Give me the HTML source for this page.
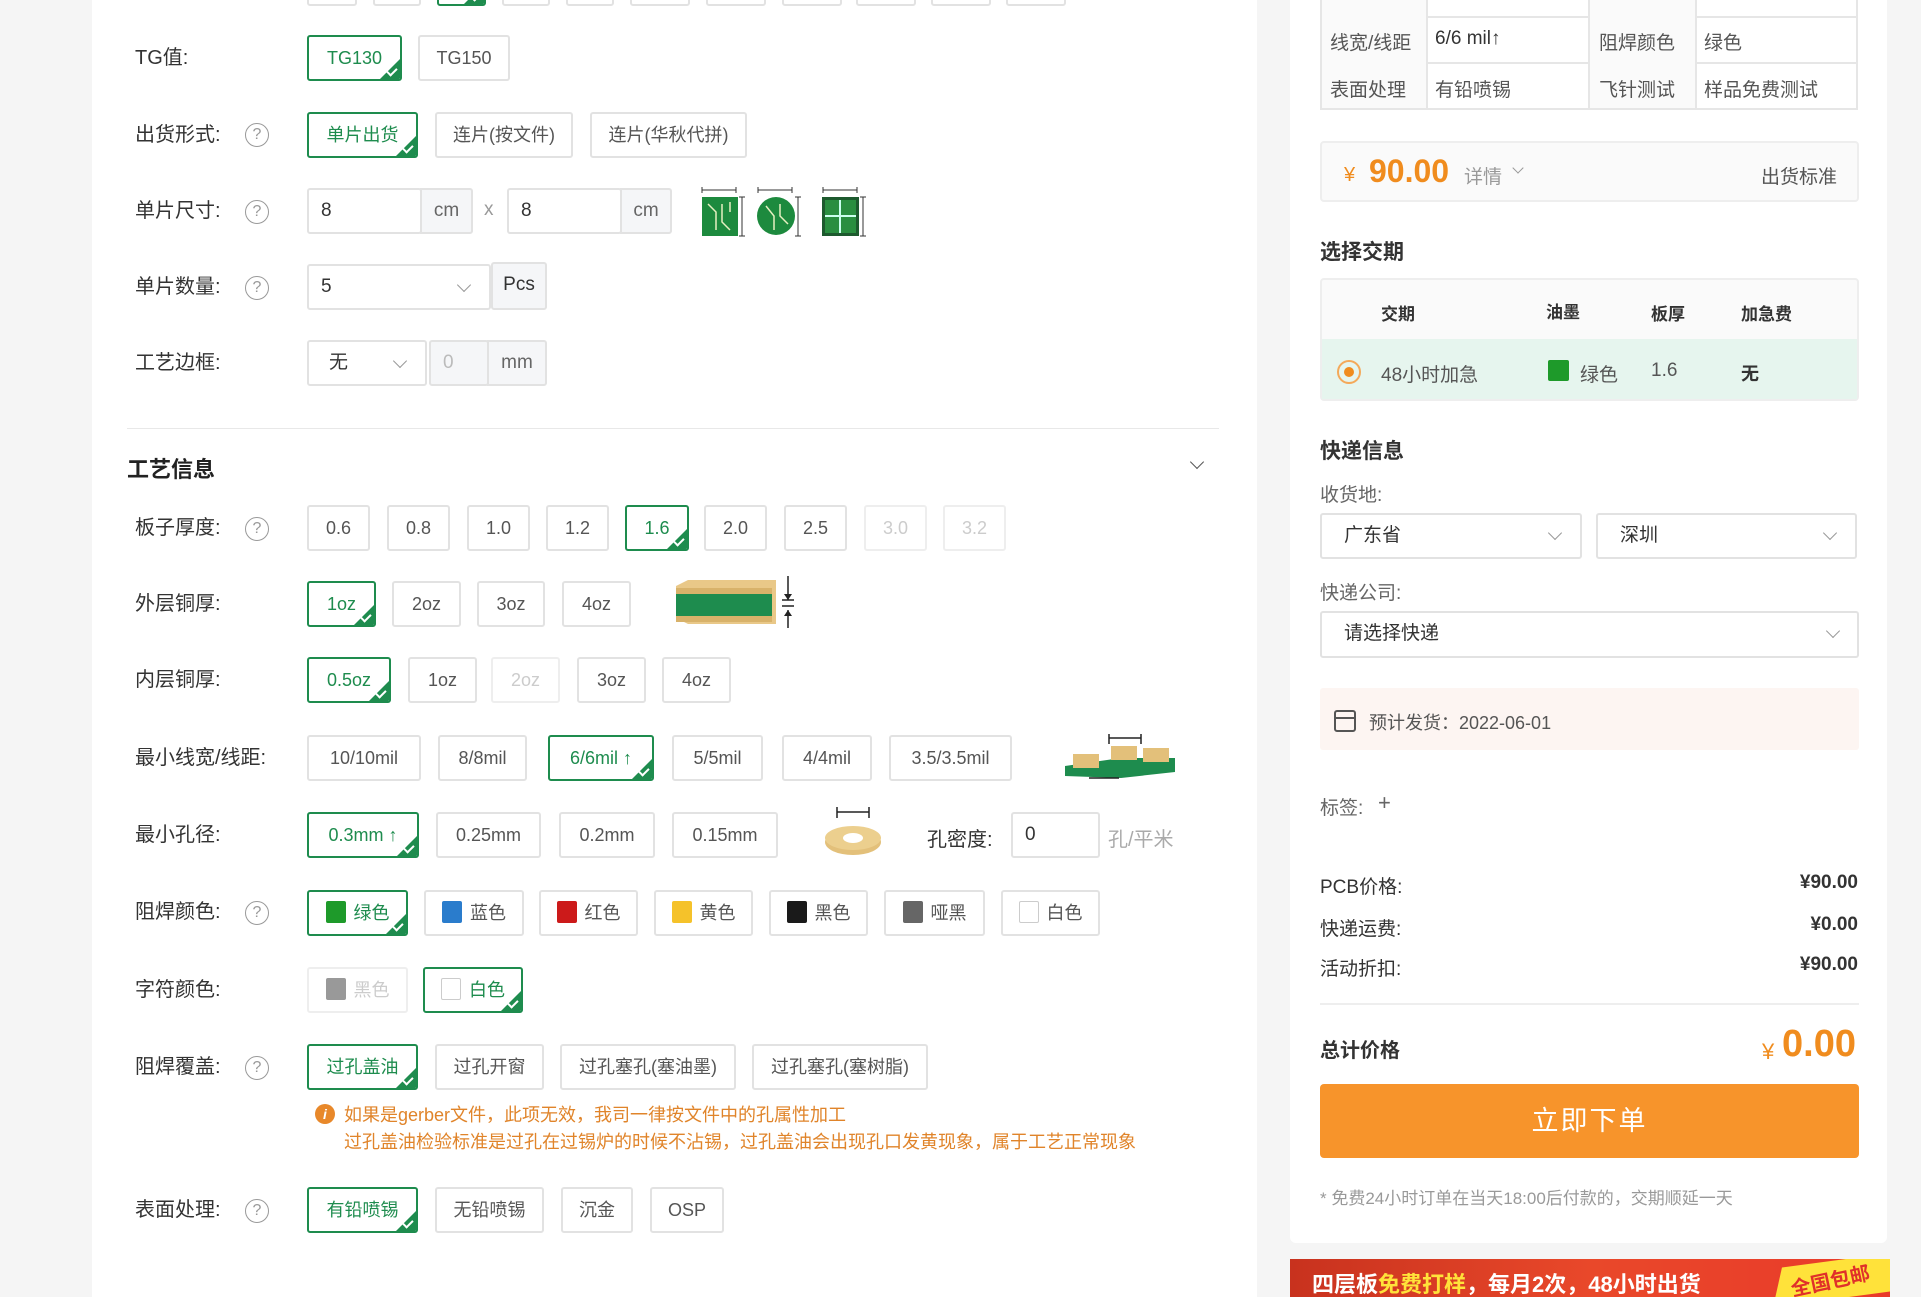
<!DOCTYPE html>
<html><head><meta charset="utf-8">
<style>
*{margin:0;padding:0;box-sizing:border-box}
body{width:1921px;height:1297px;background:#f5f5f5;font-family:"Liberation Sans","Noto Sans CJK SC",sans-serif;color:#333;position:relative;overflow:hidden}
.card{position:absolute;background:#fff}
.a{position:absolute}
.lb{position:absolute;left:135px;font-size:20px;color:#333;line-height:24px}
.q{position:absolute;left:245px;width:24px;height:24px;border:1.5px solid #999;border-radius:50%;color:#999;font-size:16px;text-align:center;line-height:21px}
.b{position:absolute;height:46px;border:2px solid #e2e2e2;border-radius:3px;font-size:18px;color:#555;text-align:center;line-height:42px;background:#fff;white-space:nowrap;overflow:hidden}
.s{border-color:#1e8c4e;color:#1e8c4e}
.s::after{content:"";position:absolute;right:0;bottom:0;border-style:solid;border-width:0 0 20px 20px;border-color:transparent transparent #1e8c4e transparent}
.s::before{content:"";position:absolute;right:3px;bottom:5px;width:8px;height:4px;border-left:2px solid #fff;border-bottom:2px solid #fff;transform:rotate(-45deg);z-index:2}
.d{color:#ccc;border-color:#eee}
.sw{display:inline-block;width:20px;height:22px;vertical-align:-4px;margin-right:8px;border-radius:2px}
.inp{position:absolute;height:46px;border:2px solid #e2e2e2;border-radius:3px;font-size:19px;line-height:42px;padding-left:12px;color:#333;background:#fff}
.add{position:absolute;height:46px;border:2px solid #e2e2e2;background:#f5f6f8;font-size:19px;line-height:42px;text-align:center;color:#666}
.chev{position:absolute;width:10px;height:10px;border-right:1.5px solid #999;border-bottom:1.5px solid #999;transform:rotate(45deg)}
.t{position:absolute;font-size:19px;color:#555}
</style></head><body>

<div class="card" style="left:92px;top:0;width:1165px;height:1297px"></div>
<div class="card" style="left:1290px;top:0;width:597px;height:1243px;border-radius:0 0 6px 6px"></div>

<!-- top partial row -->
<div class="b" style="left:307px;top:-40px;width:50px"></div>
<div class="b" style="left:373px;top:-40px;width:48px"></div>
<div class="b s" style="left:437px;top:-40px;width:49px"></div>
<div class="b" style="left:502px;top:-40px;width:48px"></div>
<div class="b" style="left:566px;top:-40px;width:48px"></div>
<div class="b" style="left:630px;top:-40px;width:60px"></div>
<div class="b" style="left:706px;top:-40px;width:60px"></div>
<div class="b" style="left:782px;top:-40px;width:60px"></div>
<div class="b" style="left:856px;top:-40px;width:60px"></div>
<div class="b" style="left:931px;top:-40px;width:60px"></div>
<div class="b" style="left:1006px;top:-40px;width:60px"></div>

<!-- TG -->
<div class="lb" style="top:46px">TG值:</div>
<div class="b s" style="left:307px;top:35px;width:95px">TG130</div>
<div class="b" style="left:418px;top:35px;width:92px">TG150</div>

<div class="lb" style="top:123px">出货形式:</div><div class="q" style="top:123px">?</div>
<div class="b s" style="left:307px;top:112px;width:111px">单片出货</div>
<div class="b" style="left:435px;top:112px;width:138px">连片(按文件)</div>
<div class="b" style="left:590px;top:112px;width:157px">连片(华秋代拼)</div>

<div class="lb" style="top:199px">单片尺寸:</div><div class="q" style="top:200px">?</div>
<div class="inp" style="left:307px;top:188px;width:115px">8</div>
<div class="add" style="left:420px;top:188px;width:53px;border-radius:0 3px 3px 0">cm</div>
<div class="t" style="left:484px;top:199px;color:#999">x</div>
<div class="inp" style="left:507px;top:188px;width:115px">8</div>
<div class="add" style="left:620px;top:188px;width:52px;border-radius:0 3px 3px 0">cm</div>
<svg class="a" style="left:700px;top:182px" width="180" height="56">
<g stroke="#333" stroke-width="1" fill="none"><path d="M2 8H36M2 5V11M36 5V11M42 15V54M39 15H45M39 54H45"/><path d="M58 8H92M58 5V11M92 5V11M98 15V54M95 15H101M95 54H101"/><path d="M123 8H157M123 5V11M157 5V11M163 15V54M160 15H166M160 54H166"/></g>
<rect x="2" y="15" width="36" height="39" fill="#1d8a3e"/>
<circle cx="76" cy="34" r="19" fill="#1d8a3e"/>
<rect x="122" y="15" width="37" height="39" fill="#1d5a2e"/><rect x="125" y="18" width="31" height="33" fill="#2a8e40"/>
<path d="M125 34H156M140 18V51" stroke="#cfe" stroke-width="2"/>
<g stroke="#e6f0c0" stroke-width="1.5" fill="none"><path d="M8 22L16 30V48M22 22V40L30 48M30 20V30"/><path d="M66 24L74 34V48M80 22V34L88 42"/></g>
</svg>

<div class="lb" style="top:275px">单片数量:</div><div class="q" style="top:276px">?</div>
<div class="inp" style="left:307px;top:264px;width:184px">5</div><div class="chev" style="left:459px;top:280px"></div>
<div class="add" style="left:491px;top:262px;width:56px;height:48px;border-radius:3px;background:#f5f6f8;color:#333">Pcs</div>

<div class="lb" style="top:351px">工艺边框:</div>
<div class="inp" style="left:307px;top:340px;width:120px;padding-left:20px">无</div><div class="chev" style="left:395px;top:356px"></div>
<div class="inp" style="left:429px;top:340px;width:60px;background:#f5f6f8;color:#bbb">0</div>
<div class="add" style="left:487px;top:340px;width:60px;border-radius:0 3px 3px 0">mm</div>

<div class="a" style="left:127px;top:428px;width:1092px;height:1px;background:#e8e8e8"></div>
<div class="a" style="left:127px;top:452px;font-size:22px;font-weight:bold;color:#222">工艺信息</div>
<div class="chev" style="left:1192px;top:457px;border-color:#555"></div>

<div class="lb" style="top:516px">板子厚度:</div><div class="q" style="top:517px">?</div>
<div class="b" style="left:307px;top:505px;width:63px">0.6</div>
<div class="b" style="left:387px;top:505px;width:63px">0.8</div>
<div class="b" style="left:467px;top:505px;width:63px">1.0</div>
<div class="b" style="left:546px;top:505px;width:63px">1.2</div>
<div class="b s" style="left:625px;top:505px;width:64px">1.6</div>
<div class="b" style="left:704px;top:505px;width:63px">2.0</div>
<div class="b" style="left:784px;top:505px;width:63px">2.5</div>
<div class="b d" style="left:864px;top:505px;width:63px">3.0</div>
<div class="b d" style="left:943px;top:505px;width:63px">3.2</div>

<div class="lb" style="top:592px">外层铜厚:</div>
<div class="b s" style="left:307px;top:581px;width:69px">1oz</div>
<div class="b" style="left:392px;top:581px;width:69px">2oz</div>
<div class="b" style="left:477px;top:581px;width:68px">3oz</div>
<div class="b" style="left:562px;top:581px;width:69px">4oz</div>
<svg class="a" style="left:676px;top:576px" width="124" height="52">
<polygon points="0,10 12,4 100,4 100,48 12,48 0,42" fill="#e9c888"/>
<rect x="0" y="18" width="96" height="22" fill="#1e8c4e"/><rect x="0" y="12" width="96" height="6" fill="#d8b26a"/><rect x="0" y="40" width="96" height="6" fill="#d8b26a"/>
<path d="M112 0V24M112 34V52M106 24H118M106 30H118" stroke="#222" stroke-width="1.5"/>
<path d="M108 18L112 24L116 18M108 40L112 34L116 40" fill="#222"/>
</svg>

<div class="lb" style="top:668px">内层铜厚:</div>
<div class="b s" style="left:307px;top:657px;width:84px">0.5oz</div>
<div class="b" style="left:408px;top:657px;width:69px">1oz</div>
<div class="b d" style="left:491px;top:657px;width:69px">2oz</div>
<div class="b" style="left:577px;top:657px;width:69px">3oz</div>
<div class="b" style="left:662px;top:657px;width:69px">4oz</div>

<div class="lb" style="top:746px">最小线宽/线距:</div>
<div class="b" style="left:307px;top:735px;width:114px">10/10mil</div>
<div class="b" style="left:438px;top:735px;width:89px">8/8mil</div>
<div class="b s" style="left:548px;top:735px;width:106px">6/6mil ↑</div>
<div class="b" style="left:672px;top:735px;width:91px">5/5mil</div>
<div class="b" style="left:782px;top:735px;width:90px">4/4mil</div>
<div class="b" style="left:889px;top:735px;width:123px">3.5/3.5mil</div>
<svg class="a" style="left:1061px;top:728px" width="118" height="56">
<polygon points="4,38 60,30 114,30 114,44 60,50 4,48" fill="#1e8c4e"/>
<rect x="12" y="26" width="26" height="14" fill="#e3c07a"/><rect x="82" y="20" width="26" height="14" fill="#e3c07a"/><rect x="50" y="18" width="26" height="14" fill="#e3c07a"/>
<path d="M48 10H80M48 6V16M80 6V16M28 50H58" stroke="#222" stroke-width="1.5"/>
</svg>

<div class="lb" style="top:823px">最小孔径:</div>
<div class="b s" style="left:307px;top:812px;width:112px">0.3mm ↑</div>
<div class="b" style="left:436px;top:812px;width:105px">0.25mm</div>
<div class="b" style="left:559px;top:812px;width:96px">0.2mm</div>
<div class="b" style="left:672px;top:812px;width:106px">0.15mm</div>
<svg class="a" style="left:823px;top:804px" width="60" height="52">
<path d="M14 8H46M14 3V14M46 3V14" stroke="#222" stroke-width="1.5"/>
<ellipse cx="30" cy="38" rx="28" ry="13" fill="#e3c07a"/><ellipse cx="30" cy="34" rx="28" ry="12" fill="#eccf8e"/><ellipse cx="30" cy="34" rx="10" ry="5" fill="#fff"/>
</svg>
<div class="t" style="left:927px;top:823px;font-size:20px;color:#333">孔密度:</div>
<div class="inp" style="left:1011px;top:812px;width:89px">0</div>
<div class="t" style="left:1108px;top:823px;color:#aaa;font-size:20px">孔/平米</div>

<div class="lb" style="top:900px">阻焊颜色:</div><div class="q" style="top:901px">?</div>
<div class="b s" style="left:307px;top:890px;width:101px"><span class="sw" style="background:#1e9a2a"></span>绿色</div>
<div class="b" style="left:424px;top:890px;width:100px"><span class="sw" style="background:#2a7ccc"></span>蓝色</div>
<div class="b" style="left:539px;top:890px;width:99px"><span class="sw" style="background:#cc1a1a"></span>红色</div>
<div class="b" style="left:654px;top:890px;width:99px"><span class="sw" style="background:#f5c22a"></span>黄色</div>
<div class="b" style="left:769px;top:890px;width:99px"><span class="sw" style="background:#1a1a1a"></span>黑色</div>
<div class="b" style="left:884px;top:890px;width:101px"><span class="sw" style="background:#666"></span>哑黑</div>
<div class="b" style="left:1001px;top:890px;width:99px"><span class="sw" style="background:#fff;border:1.5px solid #ccc"></span>白色</div>

<div class="lb" style="top:978px">字符颜色:</div>
<div class="b d" style="left:307px;top:967px;width:101px;color:#ccc"><span class="sw" style="background:#999"></span>黑色</div>
<div class="b s" style="left:423px;top:967px;width:100px"><span class="sw" style="background:#fff;border:1.5px solid #ccc"></span>白色</div>

<div class="lb" style="top:1055px">阻焊覆盖:</div><div class="q" style="top:1056px">?</div>
<div class="b s" style="left:307px;top:1044px;width:111px">过孔盖油</div>
<div class="b" style="left:435px;top:1044px;width:109px">过孔开窗</div>
<div class="b" style="left:560px;top:1044px;width:176px">过孔塞孔(塞油墨)</div>
<div class="b" style="left:752px;top:1044px;width:176px">过孔塞孔(塞树脂)</div>
<div class="a" style="left:315px;top:1104px;width:20px;height:20px;border-radius:50%;background:#e8882a;color:#fff;font-size:14px;font-weight:bold;text-align:center;line-height:20px;font-style:italic">i</div>
<div class="t" style="left:344px;top:1101px;color:#e0842a;font-size:18px">如果是gerber文件，此项无效，我司一律按文件中的孔属性加工</div>
<div class="t" style="left:344px;top:1128px;color:#e0842a;font-size:18px">过孔盖油检验标准是过孔在过锡炉的时候不沾锡，过孔盖油会出现孔口发黄现象，属于工艺正常现象</div>

<div class="lb" style="top:1198px">表面处理:</div><div class="q" style="top:1199px">?</div>
<div class="b s" style="left:307px;top:1187px;width:111px">有铅喷锡</div>
<div class="b" style="left:435px;top:1187px;width:109px">无铅喷锡</div>
<div class="b" style="left:561px;top:1187px;width:72px">沉金</div>
<div class="b" style="left:650px;top:1187px;width:74px">OSP</div>

<!-- right panel -->
<div class="a" style="left:1320px;top:-30px;width:538px;height:140px;border:2px solid #e6e6e6;border-top:none"></div>
<div class="a" style="left:1320px;top:16px;width:538px;height:2px;background:#e6e6e6"></div>
<div class="a" style="left:1320px;top:62px;width:538px;height:2px;background:#e6e6e6"></div>
<div class="a" style="left:1322px;top:0;width:104px;height:108px;background:#fafafa"></div>
<div class="a" style="left:1590px;top:0;width:105px;height:108px;background:#fafafa"></div>
<div class="a" style="left:1426px;top:0;width:2px;height:110px;background:#e6e6e6"></div>
<div class="a" style="left:1588px;top:0;width:2px;height:110px;background:#e6e6e6"></div>
<div class="a" style="left:1695px;top:0;width:2px;height:110px;background:#e6e6e6"></div>
<div class="t" style="left:1330px;top:28px;color:#555">线宽/线距</div><div class="t" style="left:1435px;top:28px;color:#333">6/6 mil↑</div>
<div class="t" style="left:1599px;top:28px">阻焊颜色</div><div class="t" style="left:1704px;top:28px">绿色</div>
<div class="t" style="left:1330px;top:75px">表面处理</div><div class="t" style="left:1435px;top:75px">有铅喷锡</div>
<div class="t" style="left:1599px;top:75px">飞针测试</div><div class="t" style="left:1704px;top:75px">样品免费测试</div>

<div class="a" style="left:1320px;top:141px;width:539px;height:61px;border:2px solid #eee;background:#fafafa;border-radius:4px"></div>
<div class="a" style="left:1344px;top:164px;color:#f08c1e;font-size:20px">¥</div>
<div class="a" style="left:1369px;top:153px;color:#f08c1e;font-size:32px;font-weight:bold">90.00</div>
<div class="t" style="left:1464px;top:162px;color:#999">详情</div><div class="chev" style="left:1514px;top:164px;width:8px;height:8px"></div>
<div class="t" style="left:1761px;top:162px;color:#555">出货标准</div>

<div class="a" style="left:1320px;top:236px;font-size:21px;font-weight:bold;color:#333">选择交期</div>
<div class="a" style="left:1320px;top:278px;width:539px;height:123px;border:2px solid #eee;border-radius:4px;background:#fafafa"></div>
<div class="a" style="left:1322px;top:339px;width:535px;height:60px;background:#e6f5ee"></div>
<div class="a" style="left:1381px;top:300px;font-size:17px;font-weight:bold">交期</div>
<div class="a" style="left:1546px;top:298px;font-size:17px;font-weight:bold">油墨</div>
<div class="a" style="left:1651px;top:300px;font-size:17px;font-weight:bold">板厚</div>
<div class="a" style="left:1741px;top:300px;font-size:17px;font-weight:bold">加急费</div>
<div class="a" style="left:1337px;top:360px;width:24px;height:24px;border-radius:50%;border:2px solid #f4a95a"></div>
<div class="a" style="left:1344px;top:367px;width:10px;height:10px;border-radius:50%;background:#f08c1e"></div>
<div class="t" style="left:1381px;top:360px">48小时加急</div>
<div class="a" style="left:1548px;top:360px;width:21px;height:21px;background:#1e9a2a;border-radius:2px"></div>
<div class="t" style="left:1580px;top:360px">绿色</div>
<div class="t" style="left:1651px;top:360px">1.6</div>
<div class="a" style="left:1741px;top:360px;font-size:18px;font-weight:bold">无</div>

<div class="a" style="left:1320px;top:435px;font-size:21px;font-weight:bold;color:#333">快递信息</div>
<div class="t" style="left:1320px;top:480px;color:#666">收货地:</div>
<div class="inp" style="left:1320px;top:513px;width:262px;height:46px;padding-left:22px;line-height:42px">广东省</div><div class="chev" style="left:1550px;top:528px"></div>
<div class="inp" style="left:1596px;top:513px;width:261px;height:46px;padding-left:22px">深圳</div><div class="chev" style="left:1825px;top:528px"></div>
<div class="t" style="left:1320px;top:578px;color:#666">快递公司:</div>
<div class="inp" style="left:1320px;top:611px;width:539px;height:47px;padding-left:22px">请选择快递</div><div class="chev" style="left:1828px;top:626px"></div>

<div class="a" style="left:1320px;top:688px;width:539px;height:62px;background:#fdf5f2;border-radius:3px"></div>
<div class="a" style="left:1334px;top:710px;width:22px;height:22px;border:2px solid #555;border-radius:3px"></div>
<div class="a" style="left:1334px;top:717px;width:22px;height:2px;background:#555"></div>
<div class="t" style="left:1369px;top:709px;font-size:18px">预计发货：2022-06-01</div>

<div class="t" style="left:1320px;top:793px;color:#666">标签:</div>
<div class="a" style="left:1378px;top:790px;font-size:22px;color:#666">+</div>

<div class="t" style="left:1320px;top:872px;color:#333">PCB价格:</div>
<div class="a" style="left:1750px;top:872px;width:108px;text-align:right;font-size:19px;font-weight:bold">¥90.00</div>
<div class="t" style="left:1320px;top:914px;color:#333">快递运费:</div>
<div class="a" style="left:1750px;top:914px;width:108px;text-align:right;font-size:19px;font-weight:bold">¥0.00</div>
<div class="t" style="left:1320px;top:954px;color:#333">活动折扣:</div>
<div class="a" style="left:1750px;top:954px;width:108px;text-align:right;font-size:19px;font-weight:bold">¥90.00</div>
<div class="a" style="left:1320px;top:1003px;width:539px;height:2px;background:#eee"></div>
<div class="a" style="left:1320px;top:1034px;font-size:20px;font-weight:bold">总计价格</div>
<div class="a" style="left:1762px;top:1039px;color:#f08c1e;font-size:22px">¥</div>
<div class="a" style="left:1782px;top:1023px;color:#f08c1e;font-size:38px;font-weight:bold">0.00</div>
<div class="a" style="left:1320px;top:1084px;width:539px;height:74px;background:#f7942b;border-radius:4px;color:#fff;font-size:27px;text-align:center;line-height:74px;letter-spacing:2px">立即下单</div>
<div class="t" style="left:1320px;top:1184px;color:#999;font-size:17px">* 免费24小时订单在当天18:00后付款的，交期顺延一天</div>

<div class="a" style="left:1290px;top:1259px;width:600px;height:38px;background:linear-gradient(90deg,#c8321e,#e9482a 50%,#e93a2a);overflow:hidden">
<div class="a" style="left:22px;top:8px;color:#fff;font-size:22px;font-weight:bold;white-space:nowrap">四层板<span style="color:#ffe23a">免费打样</span>，每月2次，48小时出货</div>
<div class="a" style="left:490px;top:0;width:120px;height:40px;background:#ffe23a;transform:skewX(-20deg) rotate(-8deg)"></div>
<div class="a" style="left:500px;top:6px;color:#e0302a;font-size:20px;font-weight:bold;transform:rotate(-12deg)">全国包邮</div>
</div>
</body></html>
